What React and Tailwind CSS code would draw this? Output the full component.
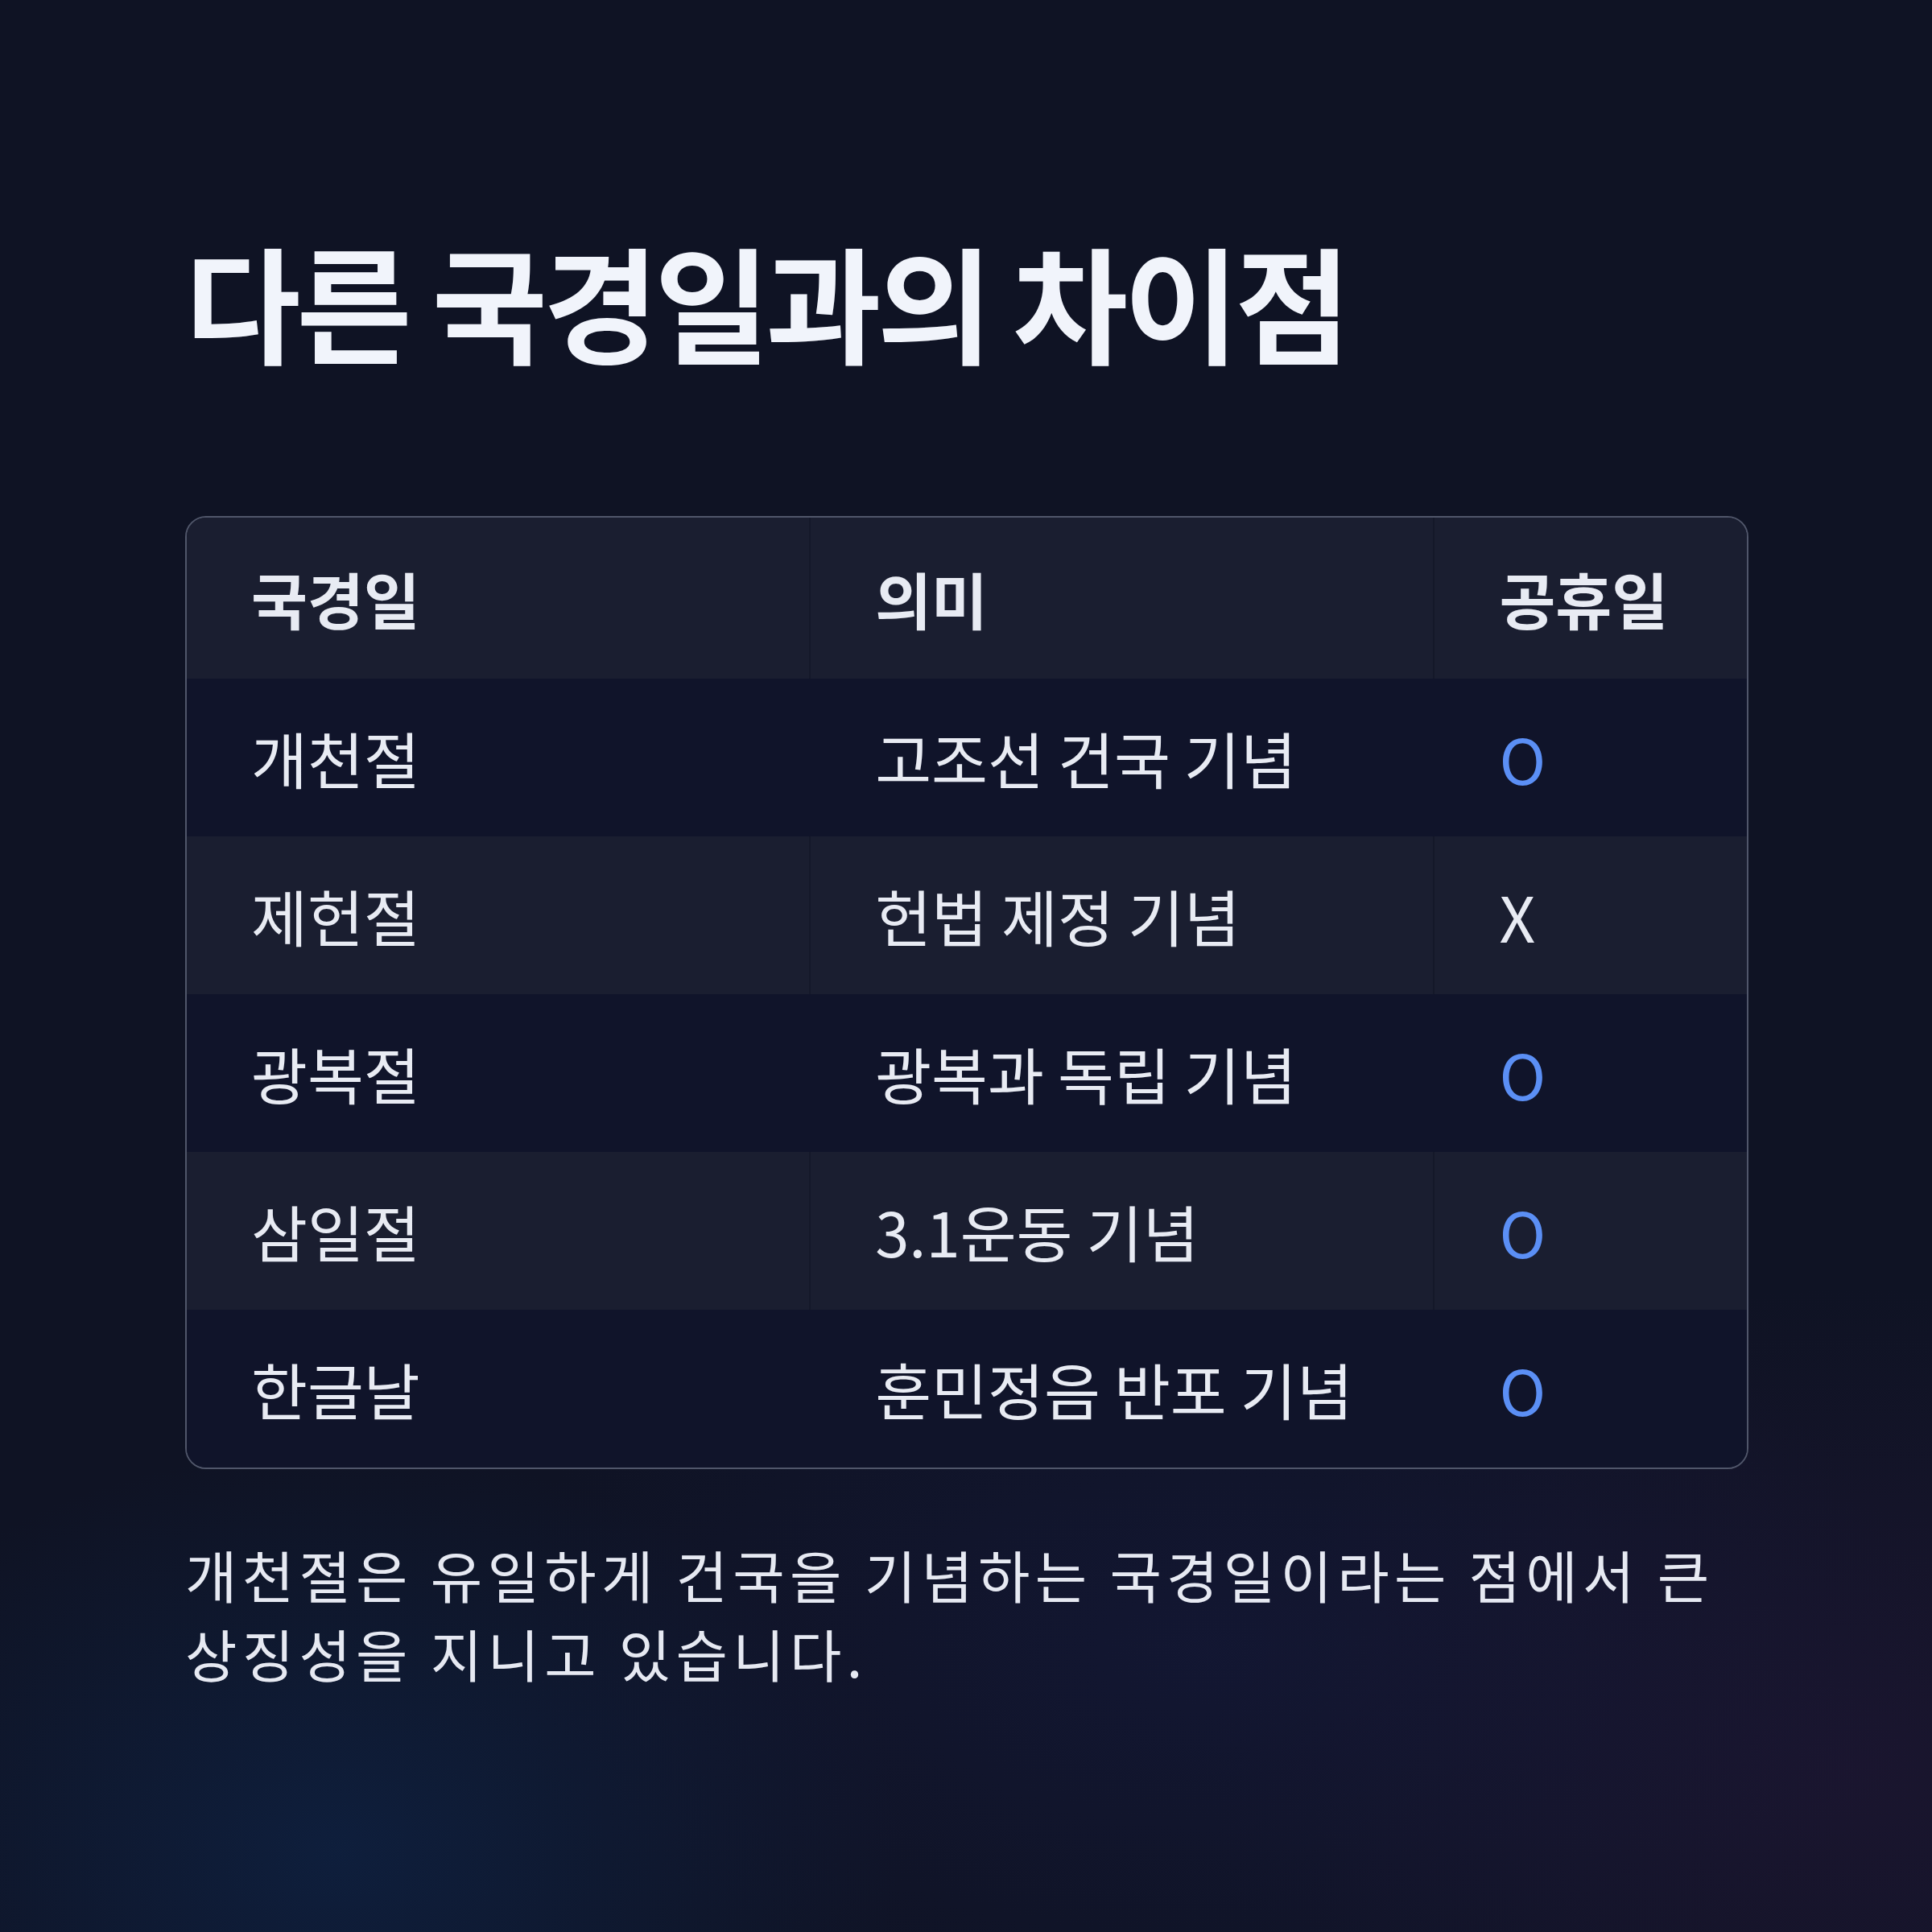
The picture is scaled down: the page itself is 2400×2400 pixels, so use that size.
import React from "react";

const rows = [
  { name: "개천절", meaning: "고조선 건국 기념", holiday: "O" },
  { name: "제헌절", meaning: "헌법 제정 기념", holiday: "X" },
  { name: "광복절", meaning: "광복과 독립 기념", holiday: "O" },
  { name: "삼일절", meaning: "3.1운동 기념", holiday: "O" },
  { name: "한글날", meaning: "훈민정음 반포 기념", holiday: "O" },
];

const font = { fontFamily: '"Noto Sans CJK KR", "Noto Sans", sans-serif' };

export default function App() {
  return (
    <div
      className="relative w-[2400px] h-[2400px] overflow-hidden bg-[#0f1324]"
      style={font}
    >
      <div className="absolute inset-0 bg-[radial-gradient(ellipse_700px_500px_at_420px_2300px,rgba(14,40,80,0.55),transparent)]" />
      <div className="absolute inset-0 bg-[radial-gradient(ellipse_800px_600px_at_2300px_2200px,rgba(40,24,60,0.45),transparent)]" />
      <div className="absolute inset-0 bg-[radial-gradient(ellipse_900px_500px_at_1500px_2050px,rgba(22,26,64,0.5),transparent)]" />

      <div className="relative flex flex-col px-[230px] pt-[294px]">
        <h1 className="text-[156px] font-bold leading-none tracking-[-0.034em] text-[#f1f4fb]">
          다른 국경일과의 차이점
        </h1>

        <div className="mt-[191px] w-[1942px] overflow-hidden rounded-[26px] border-2 border-[#50566a]">
          <div className="grid grid-cols-[2fr_2fr_1fr] bg-[#1a1e30] h-[200px]">
            <div className="flex items-center px-[80px] text-[76px] font-bold text-[#e8ebf3] border-r-2 border-[#141829]">
              국경일
            </div>
            <div className="flex items-center px-[80px] text-[76px] font-bold text-[#e8ebf3] border-r-2 border-[#141829]">
              의미
            </div>
            <div className="flex items-center px-[80px] text-[76px] font-bold text-[#e8ebf3]">
              공휴일
            </div>
          </div>
          {rows.map((r, i) => (
            <div
              key={r.name}
              className={
                "grid grid-cols-[2fr_2fr_1fr] h-[196px] " +
                (i % 2 === 0 ? "bg-[#10142a]" : "bg-[#1a1e30]")
              }
            >
              <div
                className={
                  "flex items-center px-[80px] text-[76px] text-[#e8ebf3] border-r-2 " +
                  (i % 2 === 0 ? "border-transparent" : "border-[#141829]")
                }
              >
                {r.name}
              </div>
              <div
                className={
                  "flex items-center px-[80px] text-[76px] text-[#e8ebf3] border-r-2 " +
                  (i % 2 === 0 ? "border-transparent" : "border-[#141829]")
                }
              >
                {r.meaning}
              </div>
              <div
                className={
                  "flex items-center px-[80px] text-[78px] " +
                  (r.holiday === "O" ? "text-[#5b8ff5]" : "text-[#e8ebf3]")
                }
              >
                {r.holiday}
              </div>
            </div>
          ))}
        </div>

        <p className="mt-[82px] text-[70px] leading-[98px] tracking-[0.09em] text-[#e6e9f2]">
          개천절은 유일하게 건국을 기념하는 국경일이라는 점에서 큰
          <br />
          상징성을 지니고 있습니다.
        </p>
      </div>
    </div>
  );
}
